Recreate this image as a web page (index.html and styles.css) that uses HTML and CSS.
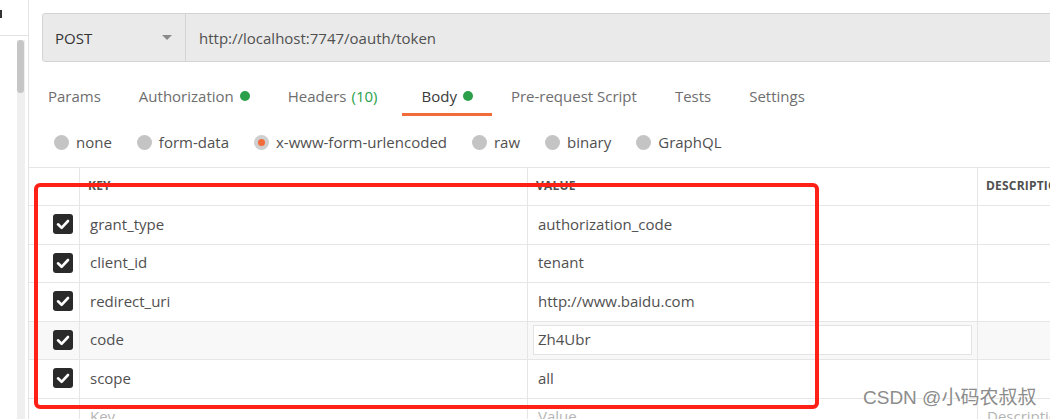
FILE: index.html
```html
<!DOCTYPE html>
<html>
<head>
<meta charset="utf-8">
<link rel="stylesheet" href="styles.css">
</head>
<body>
<div class="app">
  <aside class="sidebar">
    <div class="side-top"><span class="side-mark"></span></div>
    <div class="side-scroll"><div class="side-thumb"></div></div>
  </aside>
  <main class="main">
    <div class="urlbar">
      <div class="method">
        <span>POST</span>
        <span class="caret"></span>
      </div>
      <div class="url">http://localhost:7747/oauth/token</div>
    </div>

    <nav class="tabs">
      <div class="tab">Params</div>
      <div class="tab">Authorization <span class="dot"></span></div>
      <div class="tab">Headers <span class="count">(10)</span></div>
      <div class="tab active">Body <span class="dot"></span></div>
      <div class="tab">Pre-request Script</div>
      <div class="tab">Tests</div>
      <div class="tab">Settings</div>
    </nav>

    <div class="radios">
      <div class="radio"><span class="circle"></span>none</div>
      <div class="radio"><span class="circle"></span>form-data</div>
      <div class="radio"><span class="circle on"></span>x-www-form-urlencoded</div>
      <div class="radio"><span class="circle"></span>raw</div>
      <div class="radio"><span class="circle"></span>binary</div>
      <div class="radio"><span class="circle"></span>GraphQL</div>
    </div>

    <div class="table">
      <div class="row head">
        <div class="cell chk"></div>
        <div class="cell">KEY</div>
        <div class="cell">VALUE</div>
        <div class="cell">DESCRIPTION</div>
      </div>
      <div class="row">
        <div class="cell chk"><span class="box"><svg viewBox="0 0 20 20"><path d="M5 10.3 L8.6 13.8 L15 7"/></svg></span></div>
        <div class="cell">grant_type</div>
        <div class="cell">authorization_code</div>
        <div class="cell"></div>
      </div>
      <div class="row">
        <div class="cell chk"><span class="box"><svg viewBox="0 0 20 20"><path d="M5 10.3 L8.6 13.8 L15 7"/></svg></span></div>
        <div class="cell">client_id</div>
        <div class="cell">tenant</div>
        <div class="cell"></div>
      </div>
      <div class="row">
        <div class="cell chk"><span class="box"><svg viewBox="0 0 20 20"><path d="M5 10.3 L8.6 13.8 L15 7"/></svg></span></div>
        <div class="cell">redirect_uri</div>
        <div class="cell">http://www.baidu.com</div>
        <div class="cell"></div>
      </div>
      <div class="row hover">
        <div class="cell chk"><span class="box"><svg viewBox="0 0 20 20"><path d="M5 10.3 L8.6 13.8 L15 7"/></svg></span></div>
        <div class="cell">code</div>
        <div class="cell edit"><div class="input">Zh4Ubr</div></div>
        <div class="cell"></div>
      </div>
      <div class="row">
        <div class="cell chk"><span class="box"><svg viewBox="0 0 20 20"><path d="M5 10.3 L8.6 13.8 L15 7"/></svg></span></div>
        <div class="cell">scope</div>
        <div class="cell">all</div>
        <div class="cell"></div>
      </div>
      <div class="row placeholder">
        <div class="cell chk"></div>
        <div class="cell">Key</div>
        <div class="cell">Value</div>
        <div class="cell">Description</div>
      </div>
    </div>
  </main>
</div>
<div class="highlight"></div>
<div class="watermark">CSDN @小码农叔叔</div>
</body>
</html>
```

FILE: styles.css
```css
* { box-sizing: border-box; }
html, body {
  margin: 0;
  padding: 0;
  width: 1050px;
  height: 419px;
  overflow: hidden;
  background: #fff;
  font-family: "Open Sans", "Noto Sans", sans-serif;
  font-size: 15px;
  color: #505050;
}
.app {
  display: flex;
  height: 419px;
}
.sidebar {
  width: 29px;
  flex: none;
  border-right: 1px solid #e3e3e3;
  display: flex;
  flex-direction: column;
}
.side-top {
  height: 36px;
  border-bottom: 1px solid #e3e3e3;
  padding-top: 10px;
}
.side-mark {
  display: block;
  width: 2px;
  height: 8px;
  background: #333;
}
.side-scroll {
  margin: 4px 3px 0 17px;
  flex: 1;
  background: #efefef;
}
.side-thumb {
  width: 7px;
  height: 53px;
  border-radius: 4px;
  background: #c6c6c6;
}
.main {
  flex: 1;
  min-width: 0;
  overflow: hidden;
}
.urlbar {
  margin: 13px -10px 0 13px;
  height: 49px;
  display: flex;
  border: 1px solid #d4d4d4;
  border-radius: 3px;
  background: #eaeaea;
}
.method {
  width: 143px;
  flex: none;
  display: flex;
  align-items: center;
  justify-content: space-between;
  padding: 0 13px 0 12px;
  border-right: 1px solid #d4d4d4;
  color: #333;
}
.caret {
  width: 0;
  height: 0;
  border-left: 5px solid transparent;
  border-right: 5px solid transparent;
  border-top: 5px solid #8a8a8a;
}
.url {
  display: flex;
  align-items: center;
  padding-left: 13px;
  color: #505050;
}
.tabs {
  display: flex;
  margin-top: 15px;
}
.tab {
  padding: 9px 19px 7px;
  line-height: 20px;
  border-bottom: 3px solid transparent;
  color: #6e6e6e;
  display: flex;
  align-items: center;
  white-space: nowrap;
}
.tab.active {
  margin-left: 6px;
  color: #3a3a3a;
  border-bottom-color: #f26b3a;
}
.dot {
  display: inline-block;
  width: 10px;
  height: 10px;
  border-radius: 50%;
  background: #2b9f4a;
  margin-left: 6px;
}
.count {
  color: #2b9f4a;
  margin-left: 5px;
}
.radios {
  display: flex;
  gap: 25px;
  margin: 11px 0 0 25px;
  height: 30px;
  align-items: center;
}
.radio {
  display: flex;
  align-items: center;
  gap: 7px;
  color: #505050;
}
.circle {
  width: 15px;
  height: 15px;
  border-radius: 50%;
  background: #c4c4c4;
  display: flex;
  align-items: center;
  justify-content: center;
}
.circle.on {
  background: #cfcfcf;
}
.circle.on::after {
  content: "";
  width: 7px;
  height: 7px;
  border-radius: 50%;
  background: #f26b3a;
}
.table {
  margin-top: 10px;
  border-top: 1px solid #e6e6e6;
}
.row {
  display: grid;
  grid-template-columns: 50px 448px 450px 1fr;
  height: 38.5px;
  border-bottom: 1px solid #e6e6e6;
}
.row.head {
  height: 38px;
}
.cell {
  display: flex;
  align-items: center;
  padding-left: 10px;
  padding-bottom: 2px;
  border-left: 1px solid #e6e6e6;
  white-space: nowrap;
  overflow: hidden;
}
.cell.chk {
  border-left: none;
  padding-left: 24px;
  padding-bottom: 1px;
}
.head .cell {
  font-size: 12px;
  font-weight: 700;
  color: #505050;
  padding-left: 8px;
  letter-spacing: 0.2px;
}
.row.hover {
  background: #f8f8f8;
}
.cell.edit {
  padding: 3px 5px 4px;
}
.input {
  flex: 1;
  height: 100%;
  border: 1px solid #e3e3e3;
  background: #fff;
  display: flex;
  align-items: center;
  padding-left: 4px;
  padding-bottom: 1px;
}
.box {
  width: 20px;
  height: 20px;
  border-radius: 3px;
  background: #2a2a2a;
  display: block;
}
.box svg {
  width: 20px;
  height: 20px;
  display: block;
}
.box path {
  fill: none;
  stroke: #fff;
  stroke-width: 2.6;
  stroke-linecap: round;
  stroke-linejoin: round;
}
.placeholder .cell {
  color: #b5b5b5;
}
.placeholder .cell:nth-child(4) {
  padding-left: 9px;
}
.highlight {
  position: absolute;
  left: 34px;
  top: 183px;
  width: 785px;
  height: 226px;
  border: 4px solid #ff2016;
  border-radius: 6px;
  pointer-events: none;
}
.watermark {
  position: absolute;
  left: 863px;
  top: 386px;
  font-family: "Liberation Sans", "Noto Sans CJK SC", sans-serif;
  font-size: 19px;
  line-height: 24px;
  color: #8c8c8c;
  text-shadow: 0 0 2px #fff, 0 0 2px #fff;
  white-space: nowrap;
}
```
